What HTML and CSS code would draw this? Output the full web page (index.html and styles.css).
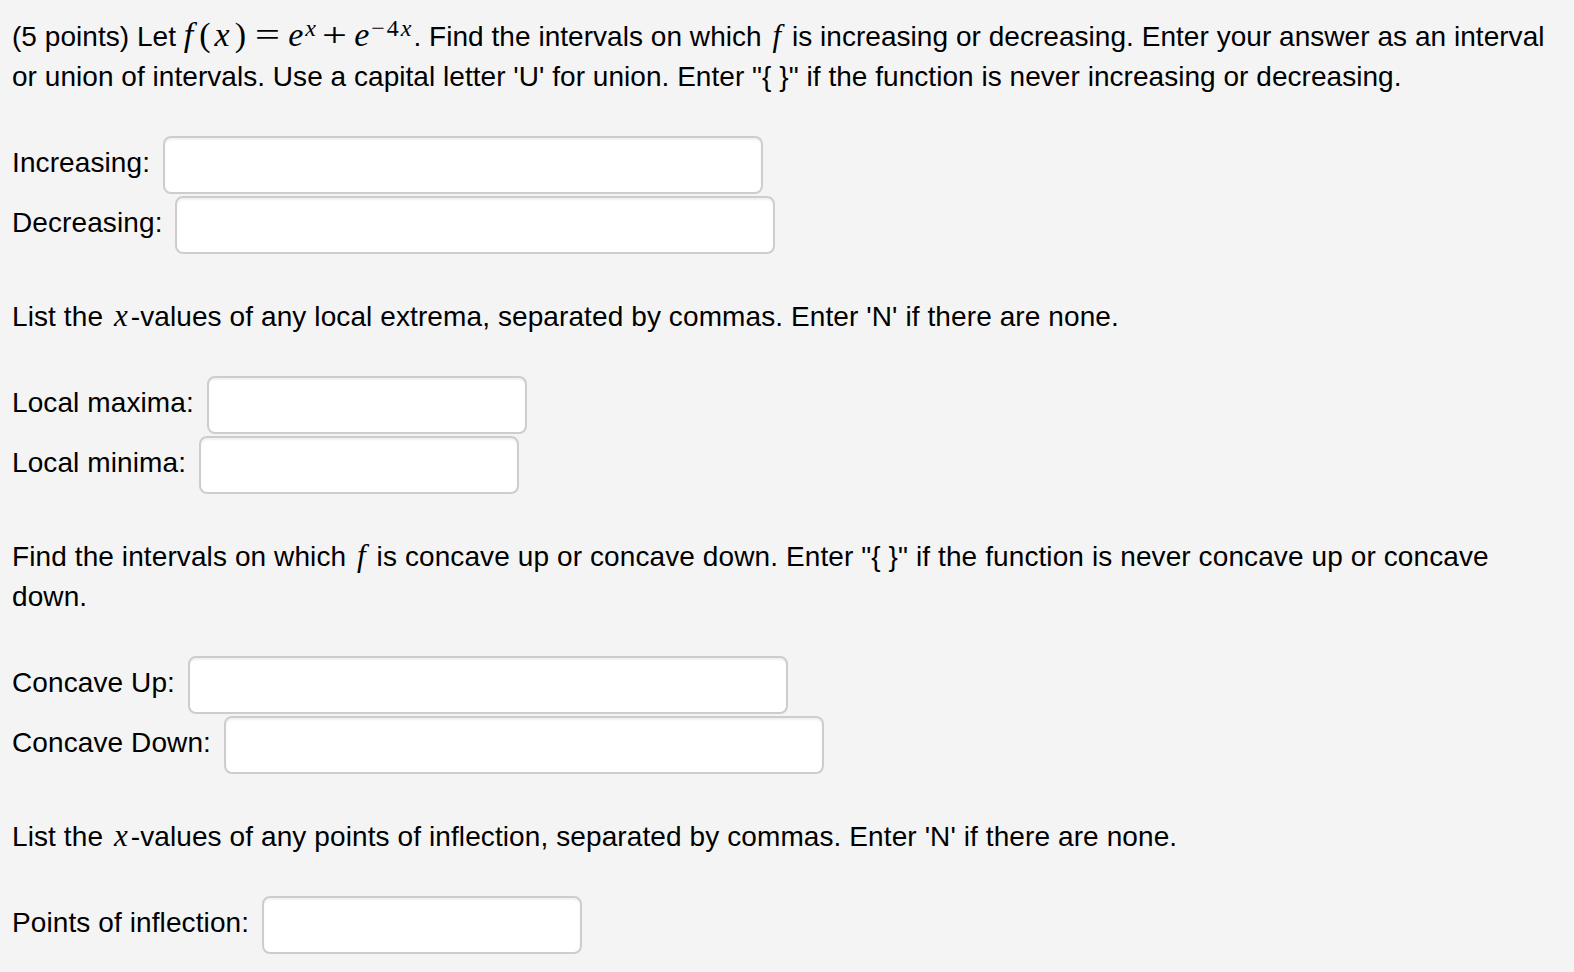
FILE: index.html
```html
<!DOCTYPE html>
<html>
<head>
<meta charset="utf-8">
<link rel="stylesheet" href="styles.css">
</head>
<body>
<div class="problem">
  <p class="para first">(5 points) Let <span class="math"><i class="mi mf">f</i><span class="mo lp">(</span><i class="mi mx">x</i><span class="mo">)</span><span class="rel"><span class="wide-op">=</span></span><i class="mi">e</i><sup class="sup"><i class="mi">x</i></sup><span class="bin"><span class="wide-op">+</span></span><i class="mi">e</i><sup class="sup"><span class="mo minus">−</span><span class="mo four">4</span><i class="mi sx">x</i></sup></span>. Find the intervals on which <i class="mi var">f</i> is increasing or decreasing. Enter your answer as an interval or union of intervals. Use a capital letter 'U' for union. Enter "{ }" if the function is never increasing or decreasing.</p>

  <div class="group">
    <div class="row">Increasing: <input class="ans wide" type="text"></div>
    <div class="row">Decreasing: <input class="ans wide" type="text"></div>
  </div>

  <p class="para">List the <i class="mi var">x</i>-values of any local extrema, separated by commas. Enter 'N' if there are none.</p>

  <div class="group">
    <div class="row">Local maxima: <input class="ans narrow" type="text"></div>
    <div class="row">Local minima: <input class="ans narrow" type="text"></div>
  </div>

  <p class="para">Find the intervals on which <i class="mi var">f</i> is concave up or concave down. Enter "{ }" if the function is never concave up or concave down.</p>

  <div class="group">
    <div class="row">Concave Up: <input class="ans wide" type="text"></div>
    <div class="row">Concave Down: <input class="ans wide" type="text"></div>
  </div>

  <p class="para">List the <i class="mi var">x</i>-values of any points of inflection, separated by commas. Enter 'N' if there are none.</p>

  <div class="group">
    <div class="row">Points of inflection: <input class="ans narrow" type="text"></div>
  </div>
</div>
</body>
</html>
```

FILE: styles.css
```css
html, body {
  margin: 0;
  padding: 0;
  background: #f4f4f4;
}

body {
  font-family: "Liberation Sans", Arial, Helvetica, sans-serif;
  font-size: 28px;
  line-height: 40px;
  letter-spacing: 0.1px;
  color: #000;
}

.problem {
  width: 1548px;
  padding: 17px 0 0 12px;
}

.para {
  margin: 0 0 38px 0;
  padding-top: 2px;
}

.para.first {
  padding-top: 0;
  margin-bottom: 38px;
  letter-spacing: 0.04px;
}

.group {
  margin: 0 0 40px 0;
}

.row {
  white-space: nowrap;
}

.ans {
  display: inline-block;
  vertical-align: middle;
  box-sizing: border-box;
  height: 58px;
  margin: 1px 0 1px 5px;
  padding: 4px 12px;
  border: 2px solid #cdcdcd;
  border-radius: 8px;
  background: #fff;
  box-shadow: inset 0 2px 2px rgba(0, 0, 0, 0.06);
  font: inherit;
  outline: none;
}

.ans.wide {
  width: 600px;
}

.ans.narrow {
  width: 320px;
}

.math {
  font-family: "Liberation Serif", "Times New Roman", serif;
  font-size: 34px;
  line-height: 0;
  letter-spacing: 0;
  white-space: nowrap;
}

.mi {
  font-family: "Liberation Serif", "Times New Roman", serif;
  font-style: italic;
}

.mf {
  margin-right: 6px;
}

.lp {
  margin-right: 4px;
}

.mx {
  margin-right: 5px;
}

.var {
  font-size: 31px;
  line-height: 0;
  letter-spacing: 0;
  margin: 0 3px;
}

.mo {
  font-style: normal;
}

.rel {
  display: inline-block;
  margin: 0 11px 0 12px;
}

.bin {
  display: inline-block;
  margin: 0 10px 0 9px;
}

.wide-op {
  display: inline-block;
  transform: scaleX(1.3);
}

.sup {
  font-size: 24px;
  line-height: 0;
  vertical-align: 10px;
  margin-left: 2px;
}

.minus {
  margin-right: 2px;
}

.four {
  margin-right: 2px;
}

.sx {
  margin-right: 2px;
}
```
